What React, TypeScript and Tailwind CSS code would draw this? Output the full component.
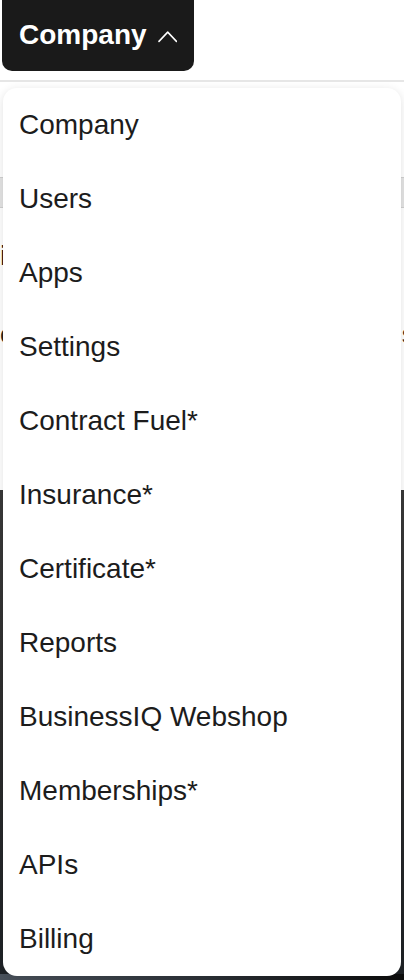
import React from 'react';

const items = [
  'Company',
  'Users',
  'Apps',
  'Settings',
  'Contract Fuel*',
  'Insurance*',
  'Certificate*',
  'Reports',
  'BusinessIQ Webshop',
  'Memberships*',
  'APIs',
  'Billing',
];

export default function App() {
  return (
    <div className="relative h-[980px] w-[404px] overflow-hidden bg-white font-['Liberation_Sans',Arial,sans-serif] text-[#1c1c1c]">
      <header className="h-[80px] pl-[2px]">
        <button className="flex h-[71px] w-[192px] items-center gap-[11px] rounded-b-[10px] bg-[#1a1a1a] px-[17px] pb-[2px] text-[28px] font-bold text-white">
          <span>Company</span>
          <svg width="20" height="14" viewBox="0 0 20 14" fill="none" className="mt-[2px]">
            <polyline points="1,12.5 10,3 19,12.5" stroke="white" strokeWidth="1.6" strokeLinecap="round" strokeLinejoin="round" />
          </svg>
        </button>
      </header>
      <div className="h-[2px] bg-[#e6e6e6]" />

      <main className="flex flex-col">
        <div className="h-[95px]" />
        <div className="h-[31px] border-y border-[#d0d0d0] bg-[#e4e4e4]" />
        <div className="h-[32px]" />
        <h2 className="h-[32px] whitespace-nowrap text-[28px] font-bold leading-[32px] text-[#111]">information</h2>
        <div className="h-[45px]" />
        <p className="h-[34px] overflow-hidden whitespace-nowrap text-[26px] leading-[34px] text-[#222]">
          contracts, cards and account details are available here c
        </p>
        <div className="h-[139px]" />
        <div className="h-[490px] bg-gradient-to-b from-[#3a3a3a] via-[#2c2c2c] to-[#1e2226]">
          <div className="mt-[484px] h-[6px] bg-gradient-to-r from-[#4a525c] via-[#2d3238] to-[#0d0d0d]" />
        </div>
      </main>

      <nav className="absolute left-[3px] top-[88px] w-[398px] rounded-[14px] bg-white shadow-[0_2px_10px_rgba(0,0,0,0.12)]">
        {items.map((item) => (
          <div key={item} className="flex h-[74px] items-center pl-[16px] text-[28px] leading-[34px] text-[#1c1c1c]">
            {item}
          </div>
        ))}
      </nav>
    </div>
  );
}
